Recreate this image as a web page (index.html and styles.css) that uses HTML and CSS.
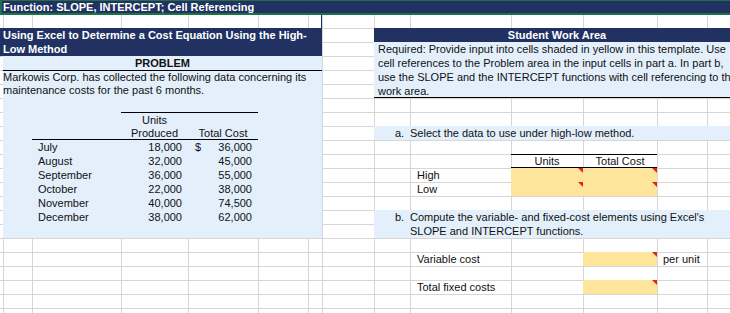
FILE: index.html
```html
<!DOCTYPE html>
<html lang="en">
<head>
  <meta charset="UTF-8">
  <meta name="viewport" content="width=device-width, initial-scale=1.0">
  <title>Function: SLOPE, INTERCEPT; Cell Referencing</title>
  <link rel="stylesheet" href="styles.css">
</head>
<body>
  <div class="sheet">
    <div class="title">Function: SLOPE, INTERCEPT; Cell Referencing</div>
    <div class="edge"></div>

    <!-- Problem area (left) -->
    <div class="problem-head">Using Excel to Determine a Cost Equation Using the High-<br>Low Method</div>
    <div class="problem-body"></div>
    <div class="problem-label">PROBLEM</div>
    <div class="problem-text">Markowis Corp. has collected the following data concerning its<br>maintenance costs for the past 6 months.</div>

    <div class="data">
      <div></div><div class="c top">Units</div><div class="top"></div>
      <div class="under"></div><div class="c under">Produced</div><div class="c under">Total Cost</div>
      <div class="month">July</div><div class="num">18,000</div><div class="cost"><span>$</span><span>36,000</span></div>
      <div class="month">August</div><div class="num">32,000</div><div class="cost"><span></span><span>45,000</span></div>
      <div class="month">September</div><div class="num">36,000</div><div class="cost"><span></span><span>55,000</span></div>
      <div class="month">October</div><div class="num">22,000</div><div class="cost"><span></span><span>38,000</span></div>
      <div class="month">November</div><div class="num">40,000</div><div class="cost"><span></span><span>74,500</span></div>
      <div class="month">December</div><div class="num">38,000</div><div class="cost"><span></span><span>62,000</span></div>
    </div>

    <!-- Student work area (right) -->
    <div class="work-head">Student Work Area</div>
    <div class="work-text">Required: Provide input into cells shaded in yellow in this template. Use<br>cell references to the Problem area in the input cells in part a. In part b,<br>use the SLOPE and the INTERCEPT functions with cell referencing to the<br>work area.</div>

    <div class="step step-a">
      <span class="step-no">a.</span>
      <span>Select the data to use under high-low method.</span>
    </div>

    <div class="pick">
      <div></div><div class="c ruled">Units</div><div class="c ruled">Total Cost</div>
      <div class="label">High</div><div class="input"></div><div class="input"></div>
      <div class="label">Low</div><div class="input"></div><div class="input"></div>
    </div>

    <div class="step step-b">
      <span class="step-no">b.</span>
      <span>Compute the variable- and fixed-cost elements using Excel's<br>SLOPE and INTERCEPT functions.</span>
    </div>

    <div class="label var-row">Variable cost</div>
    <div class="input var-row answer"></div>
    <div class="unit var-row">per unit</div>

    <div class="label fixed-row">Total fixed costs</div>
    <div class="input fixed-row answer"></div>
  </div>
</body>
</html>
```

FILE: styles.css
```css
/* Hoja de calculo: lineas de cuadricula y colores de Excel */
:root {
  --grid: #d6d6d6;
  --navy: #213262;
  --blue: #e3effb;
  --yellow: #fde59c;
}
html, body {
  margin: 0;
  padding: 0;
  overflow: hidden;
}
body {
  font-family: "Liberation Sans", Arial, sans-serif;
  font-size: 11px;
  color: #111;
}
.sheet {
  width: 740px;
  height: 313px;
  display: grid;
  grid-template-columns: 3px 29px 89px 67px 70px 50px 14px 52px 36px 101px 72px 74px 50px 33px;
  grid-template-rows: 15px 13px repeat(21, 14px);
  line-height: 14px;
  background-color: #fff;
  background-image:
    linear-gradient(var(--grid), var(--grid)),
    linear-gradient(var(--grid), var(--grid)),
    linear-gradient(var(--grid), var(--grid)),
    linear-gradient(var(--grid), var(--grid)),
    linear-gradient(var(--grid), var(--grid)),
    linear-gradient(var(--grid), var(--grid)),
    linear-gradient(var(--grid), var(--grid)),
    linear-gradient(var(--grid), var(--grid)),
    linear-gradient(var(--grid), var(--grid)),
    linear-gradient(var(--grid), var(--grid)),
    linear-gradient(var(--grid), var(--grid)),
    linear-gradient(var(--grid), var(--grid)),
    linear-gradient(var(--grid), var(--grid)),
    linear-gradient(to bottom, var(--grid) 1px, transparent 1px);
  background-position:
    3px 0, 32px 0, 121px 0, 188px 0, 258px 0, 308px 0, 322px 0,
    374px 0, 410px 0, 511px 0, 583px 0, 657px 0, 707px 0,
    0 0;
  background-size:
    1px 100%, 1px 100%, 1px 100%, 1px 100%, 1px 100%, 1px 100%, 1px 100%,
    1px 100%, 1px 100%, 1px 100%, 1px 100%, 1px 100%, 1px 100%,
    100% 14px;
  background-repeat:
    no-repeat, no-repeat, no-repeat, no-repeat, no-repeat, no-repeat, no-repeat,
    no-repeat, no-repeat, no-repeat, no-repeat, no-repeat, no-repeat,
    repeat-y;
}

/* Barra de titulo seleccionada */
.title {
  grid-row: 1;
  grid-column: 1 / -1;
  background: var(--navy);
  color: #fff;
  font-weight: bold;
  font-size: 11px;
  line-height: 12px;
  padding-left: 1px;
  border-top: 1px solid #1d7146;
  border-bottom: 2px solid #1d7146;
  border-left: 2px solid #1d7146;
  white-space: nowrap;
}
.edge {
  grid-row: 2;
  grid-column: 7 / 8;
  border-right: 1px solid var(--navy);
}

/* Area del problema */
.problem-head {
  grid-row: 3 / 5;
  grid-column: 1 / 8;
  background: var(--navy);
  color: #fff;
  font-weight: bold;
  padding-left: 3px;
}
.problem-body {
  grid-row: 5 / 18;
  grid-column: 2 / 8;
  background: var(--blue);
}
.problem-label {
  grid-row: 5;
  grid-column: 2 / 8;
  text-align: center;
  font-weight: bold;
}
.problem-text {
  grid-row: 6 / 8;
  grid-column: 2 / 8;
  border-top: 1px solid #000;
  white-space: nowrap;
  line-height: 13px;
}
.data {
  grid-row: 9 / 17;
  grid-column: 3 / 6;
  display: grid;
  grid-template-columns: 89px 67px 70px;
  grid-auto-rows: 14px;
}
.data .top {
  border-top: 1px solid #000;
}
.data .under {
  border-bottom: 1px solid #000;
}
.c {
  text-align: center;
}
.month {
  padding-left: 6px;
}
.num {
  text-align: right;
  padding-right: 6px;
}
.cost {
  display: flex;
  justify-content: space-between;
  padding: 0 6px 0 7px;
}

/* Area de trabajo del estudiante */
.work-head {
  grid-row: 3;
  grid-column: 9 / -1;
  background: var(--navy);
  color: #fff;
  font-weight: bold;
  text-align: center;
}
.work-text {
  grid-row: 4 / 8;
  grid-column: 9 / -1;
  background: var(--blue);
  border-bottom: 1px solid #000;
  padding-left: 4px;
  white-space: nowrap;
}
.step {
  grid-column: 9 / -1;
  background: var(--blue);
  display: grid;
  grid-template-columns: 36px 1fr;
  white-space: nowrap;
}
.step-no {
  padding-left: 21px;
}
.step-a {
  grid-row: 10;
}
.step-b {
  grid-row: 16 / 18;
}
.pick {
  grid-row: 12 / 15;
  grid-column: 10 / 13;
  display: grid;
  grid-template-columns: 101px 72px 74px;
  grid-auto-rows: 14px;
}
.pick .ruled {
  border-top: 1px solid #000;
  border-bottom: 1px solid #000;
  line-height: 12px;
}
.label {
  padding-left: 7px;
  white-space: nowrap;
}
.input {
  position: relative;
  background: var(--yellow);
}
.input::after {
  content: '';
  position: absolute;
  top: 0;
  right: 0;
  border-top: 5px solid #e8201a;
  border-left: 5px solid transparent;
}
.var-row {
  grid-row: 19;
}
.fixed-row {
  grid-row: 21;
}
.label.var-row,
.label.fixed-row {
  grid-column: 10;
}
.answer {
  grid-column: 12;
}
.unit {
  grid-column: 13;
  padding-left: 6px;
}
```
